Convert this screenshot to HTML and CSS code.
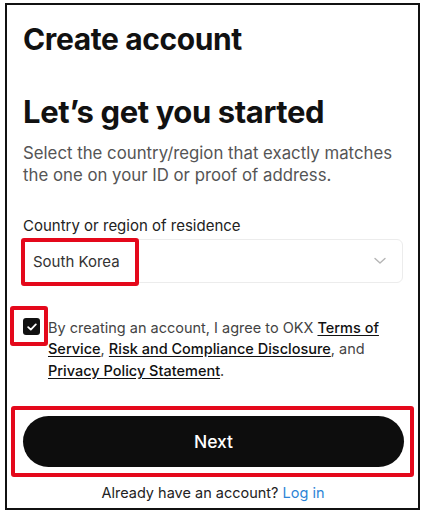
FILE: index.html
```html
<!DOCTYPE html>
<html lang="en">
<head>
<meta charset="utf-8">
<title>Create account</title>
<link rel="stylesheet" href="styles.css">
</head>
<body>
<div class="frame">
  <h1 class="title">Create account</h1>
  <h2 class="subtitle">Let’s get you started</h2>
  <p class="lead">Select the country/region that exactly matches the one on your ID or proof of address.</p>

  <div class="field">
    <div class="label">Country or region of residence</div>
    <div class="select">
      <span class="select-value">South Korea</span>
      <svg class="chevron" width="12" height="8" viewBox="0 0 12 8"><path d="M1 1.5 L6 6 L11 1.5" fill="none" stroke="#b5b5b5" stroke-width="1.4" stroke-linecap="round" stroke-linejoin="round"/></svg>
      <span class="mark mark-select"></span>
    </div>
  </div>

  <div class="agree">
    <div class="check-wrap">
      <span class="checkbox">
        <svg width="10" height="8" viewBox="0 0 10 8"><path d="M1.2 4.2 L3.8 6.6 L8.8 1.4" fill="none" stroke="#fff" stroke-width="1.8" stroke-linecap="round" stroke-linejoin="round"/></svg>
      </span>
      <span class="mark mark-check"></span>
    </div>
    <p class="agree-text">By creating an account, I agree to OKX <a class="link">Terms of Service</a>, <a class="link">Risk and Compliance Disclosure</a>, and <a class="link">Privacy Policy Statement</a>.</p>
  </div>

  <div class="btn-wrap">
    <button class="next">Next</button>
    <span class="mark mark-btn"></span>
  </div>

  <p class="login">Already have an account? <a class="login-link">Log in</a></p>
</div>
</body>
</html>
```

FILE: styles.css
```css
* { box-sizing: border-box; }
html, body { margin: 0; padding: 0; background: #fff; }
body {
  font-family: Inter, "Noto Sans", sans-serif;
  color: #111;
}
.frame {
  margin: 3px 0 0 5px;
  width: 415px;
  height: 507px;
  border: 2px solid #111;
  padding: 16px 15px 0 16px;
  display: flex;
  flex-direction: column;
}
.title {
  margin: 0;
  font-size: 30px;
  line-height: 36px;
  font-weight: 700;
  letter-spacing: -0.4px;
}
.subtitle {
  margin: 36px 0 0;
  font-size: 31px;
  line-height: 38px;
  font-weight: 700;
  letter-spacing: -0.4px;
}
.lead {
  margin: 11px 0 0;
  font-size: 16.8px;
  line-height: 22px;
  color: #555;
}
.field { margin-top: 30px; }
.label {
  font-size: 15px;
  line-height: 20px;
  color: #222;
}
.select {
  position: relative;
  margin-top: 3px;
  height: 44px;
  border: 1px solid #ececec;
  border-radius: 6px;
  display: flex;
  align-items: center;
  justify-content: space-between;
  padding: 0 16px 0 9px;
}
.select-value { font-size: 15px; color: #333; }
.mark {
  position: absolute;
  border: 4px solid #e4081b;
  border-radius: 3px;
}
.mark-select { left: -3px; top: -2px; width: 118px; height: 48px; }
.agree {
  margin-top: 34px;
  display: flex;
  align-items: flex-start;
}
.check-wrap {
  position: relative;
  width: 25px;
  flex: none;
  padding-top: 1px;
}
.checkbox {
  width: 17px;
  height: 17px;
  background: #111;
  border-radius: 3px;
  display: flex;
  align-items: center;
  justify-content: center;
}
.mark-check { left: -13px; top: -11px; width: 38px; height: 40px; }
.agree-text {
  margin: 0;
  font-size: 14.5px;
  line-height: 21.4px;
  color: #444;
}
.link {
  color: #111;
  font-weight: 500;
  text-decoration: underline;
  text-underline-offset: 1.5px;
}
.btn-wrap {
  position: relative;
  margin-top: 35px;
  margin-right: -1px;
}
.next {
  display: block;
  width: 100%;
  height: 51px;
  border: 0;
  border-radius: 26px;
  background: #0d0d0d;
  color: #fff;
  font-family: inherit;
  font-size: 17.5px;
  font-weight: 500;
}
.mark-btn { left: -12px; top: -10px; width: 403px; height: 71px; }
.login {
  margin: 16px 0 0;
  text-align: center;
  font-size: 14.5px;
  line-height: 20px;
  color: #222;
}
.login-link { color: #2d84d6; }
```
